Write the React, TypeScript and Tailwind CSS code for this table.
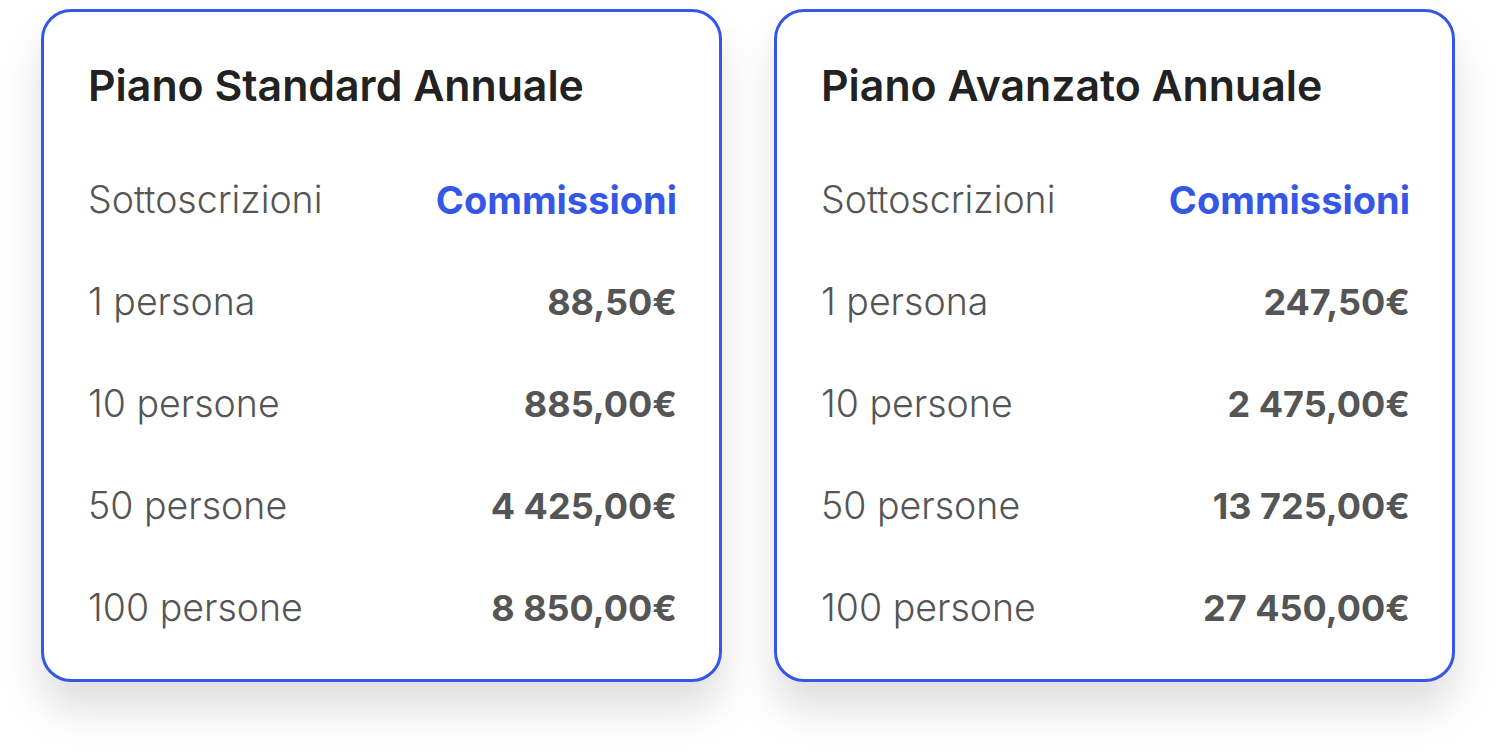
import React from 'react';

type Plan = {
  title: string;
  rows: { label: string; price: string }[];
};

const plans: Plan[] = [
  {
    title: 'Piano Standard Annuale',
    rows: [
      { label: '1 persona', price: '88,50€' },
      { label: '10 persone', price: '885,00€' },
      { label: '50 persone', price: '4 425,00€' },
      { label: '100 persone', price: '8 850,00€' },
    ],
  },
  {
    title: 'Piano Avanzato Annuale',
    rows: [
      { label: '1 persona', price: '247,50€' },
      { label: '10 persone', price: '2 475,00€' },
      { label: '50 persone', price: '13 725,00€' },
      { label: '100 persone', price: '27 450,00€' },
    ],
  },
];

const PlanCard = ({ plan }: { plan: Plan }) => (
  <div className="w-[681px] h-[673px] rounded-[30px] border-[3px] border-[#3557e6] bg-white pl-[44px] pr-[42px] pt-[38px] shadow-[0_28px_40px_rgba(0,0,0,0.13)]">
    <h2 className="h-[72px] flex items-center text-[42.8px] font-semibold text-[#222]">
      {plan.title}
    </h2>
    <div className="mt-[27px] flex h-[102px] items-center justify-between">
      <span className="text-[37.5px] font-light text-[#555]">Sottoscrizioni</span>
      <span className="text-[38px] font-bold text-[#3557e6]">Commissioni</span>
    </div>
    {plan.rows.map((row) => (
      <div key={row.label} className="flex h-[102px] items-center justify-between">
        <span className="text-[37.5px] font-light text-[#555]">{row.label}</span>
        <span className="text-[36px] font-bold text-[#555]">{row.price}</span>
      </div>
    ))}
  </div>
);

export default function App() {
  return (
    <div
      className="min-h-screen w-full bg-white flex gap-[52px] pl-[41px] pt-[9px]"
      style={{ fontFamily: 'Inter, "Noto Sans", sans-serif' }}
    >
      {plans.map((p) => (
        <PlanCard key={p.title} plan={p} />
      ))}
    </div>
  );
}
